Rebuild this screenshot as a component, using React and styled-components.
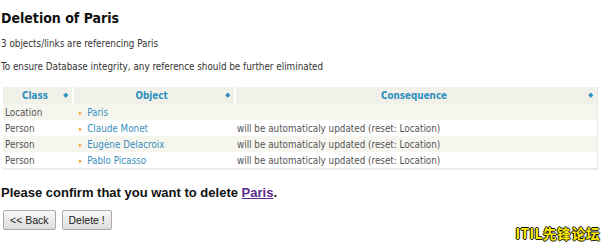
import React from "react";
import styled, { createGlobalStyle } from "styled-components";

const rows = [
  { cls: "Location", obj: "Paris", cons: "" },
  { cls: "Person", obj: "Claude Monet", cons: "will be automaticaly updated (reset: Location)" },
  { cls: "Person", obj: "Eugène Delacroix", cons: "will be automaticaly updated (reset: Location)" },
  { cls: "Person", obj: "Pablo Picasso", cons: "will be automaticaly updated (reset: Location)" },
];

const Global = createGlobalStyle`
  body {
    margin: 0;
    background: #fff;
    font-family: "DejaVu Sans Condensed", "DejaVu Sans", sans-serif;
    color: #333;
  }
`;

const Page = styled.div`
  position: relative;
  width: 601px;
  height: 246px;
  overflow: hidden;
  padding: 10px 0 0 1px;
  box-sizing: border-box;
`;

const Title = styled.h1`
  margin: 0 0 12px;
  font-size: 14px;
  font-weight: bold;
  color: #111;
`;

const Note = styled.p`
  margin: 0 0 12px;
  font-size: 9.8px;
  color: #333;
`;

const Table = styled.table`
  margin: 15px 0 0 2px;
  width: 595px;
  border-collapse: collapse;
  font-size: 9.8px;
  border-bottom: 2px solid #ecece4;
  border-right: 1px solid #e8e8e2;
`;

const Th = styled.th`
  background: #f1f1e9;
  color: #2f8fbf;
  font-weight: bold;
  height: 17px;
  padding: 0 4px;
  text-align: center;
  border-right: 2px solid #fff;
  width: ${(p) => p.w || "auto"};
  &:last-child { border-right: none; }
`;

const HeadInner = styled.div`
  display: flex;
  align-items: center;
  justify-content: space-between;
  span { flex: 1; text-align: center; }
`;

const Sort = styled.i`
  font-style: normal;
  color: #2f8fbf;
  font-size: 7px;
  line-height: 1;
`;

const Tr = styled.tr`
  background: ${(p) => (p.alt ? "#f6f6ef" : "#fff")};
`;

const Td = styled.td`
  height: 16px;
  padding: 0 2px;
  color: #555;
`;

const ObjLink = styled.a`
  color: #3a8fc0;
  text-decoration: none;
  &::before {
    content: "▸";
    color: #e5a13a;
    font-size: 7px;
    margin: 0 5px 0 4px;
    vertical-align: 1px;
  }
`;

const Confirm = styled.h2`
  margin: 15px 0 10px;
  font-family: "Liberation Sans", Arial, sans-serif;
  font-size: 13px;
  font-weight: bold;
  color: #111;
  a { color: #5a2a8c; text-decoration: underline; }
`;

const Buttons = styled.div`
  display: flex;
  gap: 6px;
  padding-left: 2px;
`;

const Button = styled.button`
  margin: 0;
  height: 20px;
  padding: 0 6px;
  font-family: "Liberation Sans", Arial, sans-serif;
  font-size: 10.5px;
  color: #222;
  border: 1px solid #aaa;
  border-radius: 2px;
  background: linear-gradient(#f8f8f8, #dcdcdc);
`;

const Watermark = styled.div`
  position: absolute;
  right: 1px;
  bottom: 3px;
  font-family: "Noto Sans CJK SC", sans-serif;
  font-size: 14px;
  font-weight: bold;
  color: #ffee00;
  text-shadow: -1px 0 #111, 1px 0 #111, 0 -1px #111, 0 1px #111;
  letter-spacing: 0.3px;
`;

const Head = ({ children, w }) => (
  <Th w={w}>
    <HeadInner>
      <span>{children}</span>
      <Sort>◆</Sort>
    </HeadInner>
  </Th>
);

export default function App() {
  return (
    <Page>
      <Global />
      <Title>Deletion of Paris</Title>
      <Note>3 objects/links are referencing Paris</Note>
      <Note>To ensure Database integrity, any reference should be further eliminated</Note>
      <Table>
        <thead>
          <tr>
            <Head w="61px">Class</Head>
            <Head w="152px">Object</Head>
            <Head>Consequence</Head>
          </tr>
        </thead>
        <tbody>
          {rows.map((r, i) => (
            <Tr key={i} alt={i % 2 === 0}>
              <Td>{r.cls}</Td>
              <Td><ObjLink href="#">{r.obj}</ObjLink></Td>
              <Td>{r.cons}</Td>
            </Tr>
          ))}
        </tbody>
      </Table>
      <Confirm>
        Please confirm that you want to delete <a href="#">Paris</a>.
      </Confirm>
      <Buttons>
        <Button>&lt;&lt; Back</Button>
        <Button>Delete !</Button>
      </Buttons>
      <Watermark>ITIL先锋论坛</Watermark>
    </Page>
  );
}
